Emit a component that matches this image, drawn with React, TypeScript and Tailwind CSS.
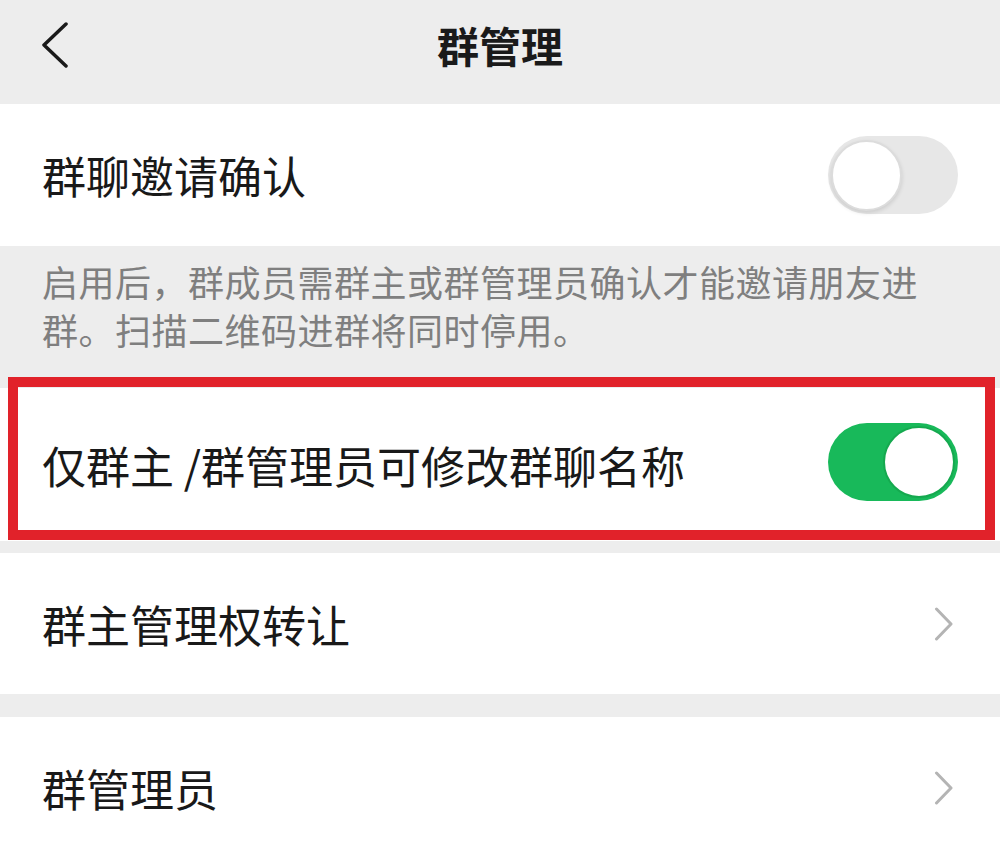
import React from "react";

const font = { fontFamily: '"Noto Sans CJK SC", "Noto Sans", sans-serif' };

const ChevronRight = () => (
  <svg width="20" height="34" viewBox="0 0 20 34" fill="none" className="shrink-0">
    <polyline points="2.5,2 17,17 2.5,32" stroke="#b4b4b4" strokeWidth="3" strokeLinecap="round" strokeLinejoin="round" />
  </svg>
);

const Toggle = ({ on }: { on: boolean }) => (
  <div
    className={
      on
        ? "relative w-[130px] h-[78px] rounded-full bg-[#18b95a] shrink-0"
        : "relative w-[130px] h-[78px] rounded-full bg-[#e7e7e7] shrink-0"
    }
  >
    <div
      className={
        on
          ? "absolute top-[3px] right-[3px] w-[72px] h-[72px] rounded-full bg-white border-2 border-[#15a94f]"
          : "absolute top-[4px] left-[3px] w-[71px] h-[71px] rounded-full bg-white border-2 border-[#dcdcdc] shadow-[0_2px_4px_rgba(0,0,0,0.12)]"
      }
    />
  </div>
);

const Row = ({ label, children, h = "h-[141px]" }: { label: string; children?: React.ReactNode; h?: string }) => (
  <div className={`flex items-center justify-between bg-white pl-[42px] ${h}`}>
    <span className="text-[44px] leading-[44px] text-[#191919]">{label}</span>
    {children}
  </div>
);

export default function App() {
  return (
    <div className="w-[1000px] min-h-[847px] bg-[#ededed]" style={font}>
      <div className="relative h-[104px] flex justify-center pt-[24px]">
        <svg width="28" height="46" viewBox="0 0 28 46" fill="none" className="absolute left-[41px] top-[22px]">
          <polyline points="25,2 3,23 25,44" stroke="#1a1a1a" strokeWidth="3.5" strokeLinecap="round" strokeLinejoin="round" />
        </svg>
        <h1 className="text-[42px] leading-[42px] font-bold text-[#1a1a1a]">群管理</h1>
      </div>

      <Row label="群聊邀请确认" h="h-[142px]">
        <div className="pr-[42px]">
          <Toggle on={false} />
        </div>
      </Row>

      <div className="h-[142px] pl-[42px] pt-[11px]">
        <p className="w-[890px] text-[36px] leading-[48px] tracking-[0.5px] text-[#7f7f7f]">
          启用后，群成员需群主或群管理员确认才能邀请朋友进群。扫描二维码进群将同时停用。
        </p>
      </div>

      <div className="relative">
        <Row label="仅群主 /群管理员可修改群聊名称" h="h-[153px]">
          <div className="pr-[42px] -mt-[6px]">
            <Toggle on={true} />
          </div>
        </Row>
        <div className="absolute top-[-11px] bottom-[1px] left-[8px] right-[5px] border-[10px] border-[#e1222a]" />
      </div>

      <div className="h-[12px]" />

      <Row label="群主管理权转让">
        <div className="pr-[46px]">
          <ChevronRight />
        </div>
      </Row>

      <div className="h-[23px]" />

      <Row label="群管理员">
        <div className="pr-[46px]">
          <ChevronRight />
        </div>
      </Row>
    </div>
  );
}
